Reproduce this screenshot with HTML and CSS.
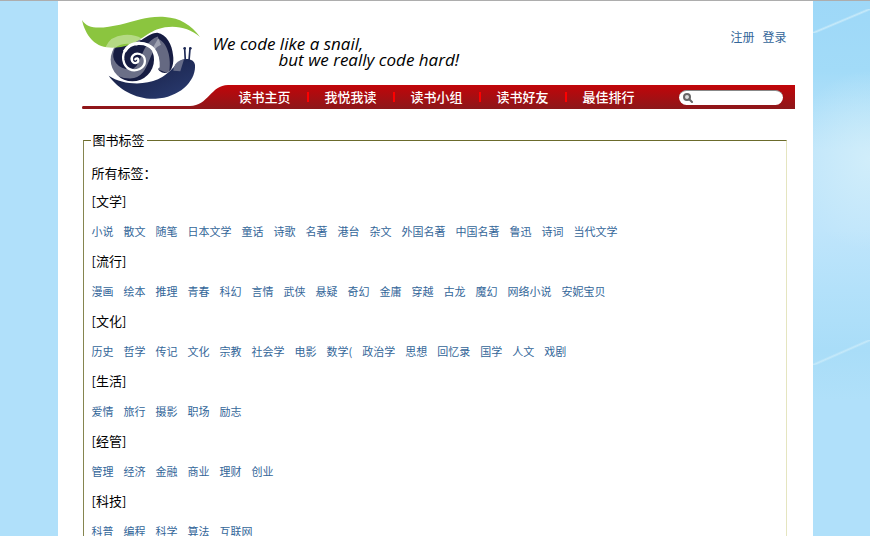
FILE: index.html
```html
<!DOCTYPE html>
<html lang="zh-CN">
<head>
<meta charset="utf-8">
<meta name="viewport" content="width=device-width, initial-scale=1">
<title>图书标签</title>
<link rel="stylesheet" href="styles.css">
</head>
<body>
<div class="page">
  <header class="header">
    <svg class="logo" viewBox="36 45 354 252" aria-hidden="true">
      <defs>
        <linearGradient id="body" x1="0" y1="0" x2="1" y2="1"><stop offset="0" stop-color="#141a3c"/><stop offset="1" stop-color="#2b3d73"/></linearGradient>
      </defs>
      <path d="M205 127C225 112 245 98 262 98C290 102 307 135 309 165C313 187 306 216 291 219C278 220 267 214 264 206C266 172 250 135 205 127Z" fill="#161c42"/>
      <circle cx="187" cy="179" r="65" fill="#161c42"/>
      <path d="M36 60C55 92 100 84 150 74C205 62 230 48 285 51C330 54 365 75 390 111C360 86 325 76 285 82C235 91 220 120 180 134C140 146 95 150 66 120C50 103 40 80 36 60Z" fill="#8bc53f"/>
      <path d="M208 127C188 115 135 110 120 145C105 185 136 222 180 222C232 220 216 142 268 122" fill="none" stroke="#fff" stroke-opacity=".37" stroke-width="27"/>
      <path d="M264 116C292 128 306 172 297 222L264 208C264 184 257 162 246 148Z" fill="#fff" fill-opacity=".34"/>
      <path d="M264 202C266 158 245 128 205 130C174 131 156 155 160 180C165 207 188 217 209 207C230 196 230 168 209 162C192 157 180 172 187 184C193 193 205 189 205 181C206 175 200 173 196 178" fill="none" stroke="#fff" stroke-width="7" stroke-linecap="round"/>
      <path d="M264 202C266 158 245 128 205 130C184 131 170 142 163 155" fill="none" stroke="#fff" stroke-width="10"/>
      <path d="M116 227C157 254 220 257 264 238C305 220 319 183 342 178C357 174 374 181 375 195C378 243 329 292 257 296C200 299 146 269 116 227Z" fill="url(#body)" stroke="#fff" stroke-width="3" paint-order="stroke"/>
      <path d="M310 212C311 192 325 181 342 178L331 214Z" fill="#666c88"/>
      <path d="M346 182L344 146M357 182L360 146" stroke="#1e2a56" stroke-width="5" stroke-linecap="round"/>
      <circle cx="344" cy="145" r="4" fill="#1e2a56"/><circle cx="361" cy="145" r="4" fill="#1e2a56"/>
    </svg>
    <p class="tagline"><span>We code like a snail,</span><span class="second">but we really code hard!</span></p>
    <div class="account"><a href="#">注册</a><a href="#">登录</a></div>
    <nav class="nav">
      <svg class="swoosh" viewBox="0 0 146 24" aria-hidden="true">
        <defs><linearGradient id="red" x1="0" y1="0" x2="0" y2="1"><stop offset="0" stop-color="#c20509"/><stop offset="1" stop-color="#8c171a"/></linearGradient></defs>
        <path d="M1 21H108C126 21 129 0 146 0V24H1Q0 24 0 22.500Q0 21 1 21Z" fill="url(#red)"/>
      </svg>
      <div class="bar">
        <ul class="menu">
          <li><a href="#">读书主页</a></li>
          <li><a href="#">我悦我读</a></li>
          <li><a href="#">读书小组</a></li>
          <li><a href="#">读书好友</a></li>
          <li><a href="#">最佳排行</a></li>
        </ul>
        <label class="search">
          <svg class="lens" viewBox="0 0 10 10" aria-hidden="true"><circle cx="4" cy="4" r="3" fill="#ddd" stroke="#666" stroke-width="2"/><path d="M6.300 6.300L9 9" stroke="#666" stroke-width="2" stroke-linecap="round"/></svg>
          <input type="search" aria-label="搜索">
        </label>
      </div>
    </nav>
  </header>
  <main>
    <fieldset class="tags">
      <legend>图书标签</legend>
      <p class="all">所有标签：</p>
      <h2>[文学]</h2>
      <div class="row"><a href="#">小说</a><a href="#">散文</a><a href="#">随笔</a><a href="#">日本文学</a><a href="#">童话</a><a href="#">诗歌</a><a href="#">名著</a><a href="#">港台</a><a href="#">杂文</a><a href="#">外国名著</a><a href="#">中国名著</a><a href="#">鲁迅</a><a href="#">诗词</a><a href="#">当代文学</a></div>
      <h2>[流行]</h2>
      <div class="row"><a href="#">漫画</a><a href="#">绘本</a><a href="#">推理</a><a href="#">青春</a><a href="#">科幻</a><a href="#">言情</a><a href="#">武侠</a><a href="#">悬疑</a><a href="#">奇幻</a><a href="#">金庸</a><a href="#">穿越</a><a href="#">古龙</a><a href="#">魔幻</a><a href="#">网络小说</a><a href="#">安妮宝贝</a></div>
      <h2>[文化]</h2>
      <div class="row"><a href="#">历史</a><a href="#">哲学</a><a href="#">传记</a><a href="#">文化</a><a href="#">宗教</a><a href="#">社会学</a><a href="#">电影</a><a href="#">数学(</a><a href="#">政治学</a><a href="#">思想</a><a href="#">回忆录</a><a href="#">国学</a><a href="#">人文</a><a href="#">戏剧</a></div>
      <h2>[生活]</h2>
      <div class="row"><a href="#">爱情</a><a href="#">旅行</a><a href="#">摄影</a><a href="#">职场</a><a href="#">励志</a></div>
      <h2>[经管]</h2>
      <div class="row"><a href="#">管理</a><a href="#">经济</a><a href="#">金融</a><a href="#">商业</a><a href="#">理财</a><a href="#">创业</a></div>
      <h2>[科技]</h2>
      <div class="row"><a href="#">科普</a><a href="#">编程</a><a href="#">科学</a><a href="#">算法</a><a href="#">互联网</a></div>
    </fieldset>
  </main>
</div>
</body>
</html>
```

FILE: styles.css
```css
* { box-sizing: border-box; }

body {
  margin: 0;
  border-top: 1px solid #adadad;
  font: 13px/20px "Noto Sans CJK SC", sans-serif;
  color: #000;
  background:
    linear-gradient(to bottom right, transparent 46%, rgba(216, 241, 250, .7) 50%, transparent 54%) right 9px / 57px 24px no-repeat,
    linear-gradient(to bottom right, transparent 46%, rgba(216, 241, 250, .6) 50%, transparent 54%) right 340px / 57px 25px no-repeat,
    radial-gradient(ellipse farthest-side at right, rgba(216, 241, 250, .7), transparent) right 70px / 80px 180px no-repeat,
    linear-gradient(#9ed8f8, #a2dbf8 70px, #bfe5fa 150px, #bfe5fb 230px, #b3e1fa 290px, #a9ddf8 350px, #b0e0f9 400px) right top / 50% 400px no-repeat,
    #b0e0fa;
}

a { color: #369; text-decoration: none; }

.page {
  max-width: 755px;
  margin: 0 auto;
  padding: 0 18px 24px 24px;
  background: #fff;
}

.header {
  display: grid;
  grid-template-columns: 131px 1fr auto;
  grid-template-rows: 84px 24px;
}

.logo {
  grid-area: 1 / 1 / 3 / 2;
  width: 118px;
  height: 84px;
  margin-top: 14px;
  z-index: 1;
}

.tagline {
  grid-area: 1 / 2;
  margin: 35px 0 0;
  font: italic 500 17px/16px "Open Sans", sans-serif;
}

.tagline span { display: block; }
.tagline .second { padding-left: 66px; }

.account {
  grid-area: 1 / 3;
  display: flex;
  gap: 8px;
  align-items: flex-start;
  padding: 26px 8px 0 0;
  font-size: 12px;
}

.nav { grid-area: 2 / 1 / 3 / 4; display: flex; }
.swoosh { width: 146px; height: 24px; flex: none; }

.bar {
  flex: 1;
  display: flex;
  align-items: center;
  justify-content: space-between;
  padding: 0 12px 0 11px;
  background: linear-gradient(#c20509, #8c171a);
}

.menu { display: flex; margin: 0; padding: 0; list-style: none; }
.menu li { display: flex; align-items: center; }
.menu li + li::before {
  content: "";
  width: 2px;
  height: 10px;
  margin: 0 16px;
  background: #f00;
}
.menu a { color: #fff; font-weight: 500; }

.search {
  display: flex;
  align-items: center;
  width: 104px;
  height: 15px;
  padding: 0 4px;
  border-radius: 8px;
  background: #fff;
  border-top: 1px solid #888;
}
.lens { width: 10px; height: 10px; flex: none; }
.search input {
  min-width: 0;
  flex: 1;
  height: 12px;
  padding: 0 4px;
  border: 0;
  outline: 0;
  background: none;
  font-size: 11px;
}

.tags {
  margin: 21px 8px 0 1px;
  padding: 13px 7px 24px 8px;
  border: 1px solid;
  border-color: #6b6b2b #e5e5c0 #e5e5c0 #85854f;
}
.tags legend { padding: 0 2px; margin-left: -1px; }
.all { margin: 0 0 8px; }

.tags h2 { margin: 0 0 10px; font-size: 13px; font-weight: 400; }

.row {
  display: flex;
  flex-wrap: wrap;
  gap: 0 10px;
  margin-bottom: 10px;
  font-size: 11px;
}
```
